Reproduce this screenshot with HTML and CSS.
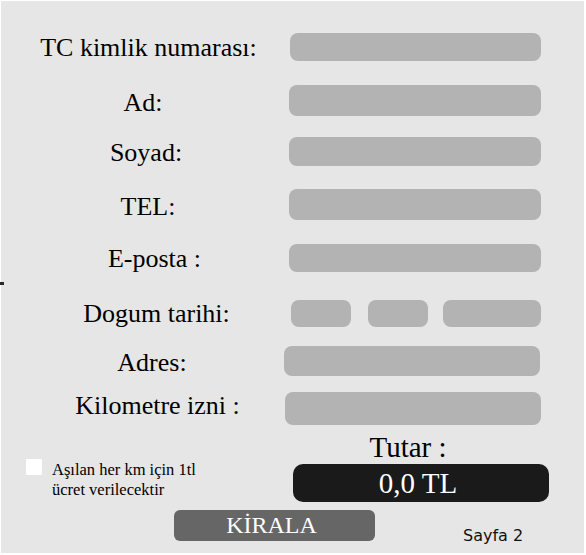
FILE: index.html
```html
<!DOCTYPE html>
<html lang="tr">
<head>
<meta charset="utf-8">
<title>Kiralama Formu</title>
<link rel="stylesheet" href="styles.css">
</head>
<body>
<span class="edge-mark"></span>
<main class="page">
  <div class="form">
    <div class="row row--tc">
      <span class="label">TC kimlik numarası:</span>
      <div class="field"></div>
    </div>
    <div class="row row--ad">
      <span class="label">Ad:</span>
      <div class="field"></div>
    </div>
    <div class="row row--soyad">
      <span class="label">Soyad:</span>
      <div class="field"></div>
    </div>
    <div class="row row--tel">
      <span class="label">TEL:</span>
      <div class="field"></div>
    </div>
    <div class="row row--eposta">
      <span class="label">E-posta :</span>
      <div class="field"></div>
    </div>
    <div class="row row--dogum">
      <span class="label">Dogum tarihi:</span>
      <div class="date">
        <div class="field field--day"></div>
        <div class="field field--month"></div>
        <div class="field field--year"></div>
      </div>
    </div>
    <div class="row row--adres">
      <span class="label">Adres:</span>
      <div class="field"></div>
    </div>
    <div class="row row--km">
      <span class="label">Kilometre izni :</span>
      <div class="field"></div>
    </div>
  </div>

  <section class="summary">
    <div class="note">
      <span class="checkbox"></span>
      <p class="note-text">Aşılan her km için 1tl<br>ücret verilecektir</p>
    </div>
    <div class="total">
      <div class="total-label">Tutar :</div>
      <div class="total-box">0,0 TL</div>
    </div>
  </section>

  <div class="actions">
    <button class="btn" type="button">KİRALA</button>
    <span class="page-no">Sayfa 2</span>
  </div>
</main>
</body>
</html>
```
FILE: styles.css
```css
html, body {
  margin: 0;
  padding: 0;
  background: #ffffff;
}

body {
  position: relative;
  width: 586px;
  height: 555px;
  overflow: hidden;
  font-family: "Liberation Serif", "Times New Roman", serif;
  color: #000;
}

.edge-mark {
  position: absolute;
  left: 0;
  top: 282px;
  width: 4px;
  height: 3px;
  background: #2a2a2a;
}

.page {
  margin: 1px 2px 2px 1px;
  height: 552px;
  background: #e6e6e6;
  padding-top: 32px;
  box-sizing: border-box;
  font-family: "Liberation Serif", "Times New Roman", serif;
}

.row {
  display: grid;
  grid-template-columns: 288px 252px;
  height: 27px;
  align-items: center;
}

.label {
  display: block;
  font-family: "Liberation Serif", "Times New Roman", serif;
  font-size: 26px;
  line-height: 27px;
  text-align: center;
  white-space: nowrap;
  box-sizing: border-box;
  color: #000;
}

.field {
  height: 100%;
  background: #b3b3b3;
  border-radius: 8px;
}

.row--tc { height: 28px; }
.row--tc .label { padding-left: 7px; }
.row--tc .field { margin-left: 1px; }

.row--ad { margin-top: 24px; }
.row--ad .label { padding-right: 4px; padding-top: 4px; }

.row--soyad { margin-top: 25px; }
.row--soyad .label { padding-left: 2px; padding-top: 2px; }

.row--tel { margin-top: 25px; height: 28px; }
.row--tel .label { padding-left: 6px; padding-top: 4px; }

.row--eposta { margin-top: 27px; }
.row--eposta .label { padding-left: 19px; padding-top: 1px; }

.row--dogum { margin-top: 29px; }
.row--dogum .label { padding-left: 23px; }

.date {
  display: flex;
  height: 100%;
  padding-left: 2px;
}

.field--day { width: 60px; }
.field--month { width: 60px; margin-left: 17px; }
.field--year { width: 98px; margin-left: 15px; }

.row--adres { margin-top: 19px; }
.row--adres .label { padding-left: 14px; padding-top: 3px; }
.row--adres .field { margin-left: -5px; width: 256px; }

.row--km { margin-top: 19px; }
.row--km .label { padding-left: 25px; padding-bottom: 6px; }
.row--km .field { margin-left: -4px; width: 256px; }

.summary {
  display: grid;
  grid-template-columns: 292px 256px;
  margin-top: 13px;
}

.note {
  display: flex;
  align-items: flex-start;
  padding-left: 25px;
  padding-top: 27px;
}

.checkbox {
  width: 16px;
  height: 16px;
  background: #ffffff;
  border-radius: 1px;
  flex: none;
}

.note-text {
  margin: 0.5px 0 0 10px;
  font-family: "Liberation Serif", "Times New Roman", serif;
  font-size: 16.5px;
  line-height: 20px;
}

.total {
  display: flex;
  flex-direction: column;
}

.total-label {
  font-family: "Liberation Serif", "Times New Roman", serif;
  font-size: 29px;
  line-height: 30px;
  text-align: center;
  padding-right: 26px;
}

.total-box {
  margin-top: 2px;
  height: 38px;
  background: #1a1a1a;
  border-radius: 10px;
  color: #ffffff;
  font-family: "Liberation Serif", "Times New Roman", serif;
  font-size: 29px;
  line-height: 38px;
  text-align: center;
  padding-right: 6px;
}

.actions {
  display: flex;
  align-items: flex-start;
  padding-left: 173px;
  margin-top: 8px;
}

.btn {
  width: 201px;
  height: 31px;
  margin: 0;
  padding: 0 6px 0 0;
  border: none;
  border-radius: 6px;
  background: #666666;
  color: #ffffff;
  font-family: "Liberation Serif", "Times New Roman", serif;
  font-size: 24px;
  line-height: 31px;
}

.page-no {
  margin-left: 88px;
  margin-top: 16px;
  font-family: "DejaVu Sans", Verdana, sans-serif;
  font-size: 16px;
  line-height: 19px;
  color: #111;
}
```
